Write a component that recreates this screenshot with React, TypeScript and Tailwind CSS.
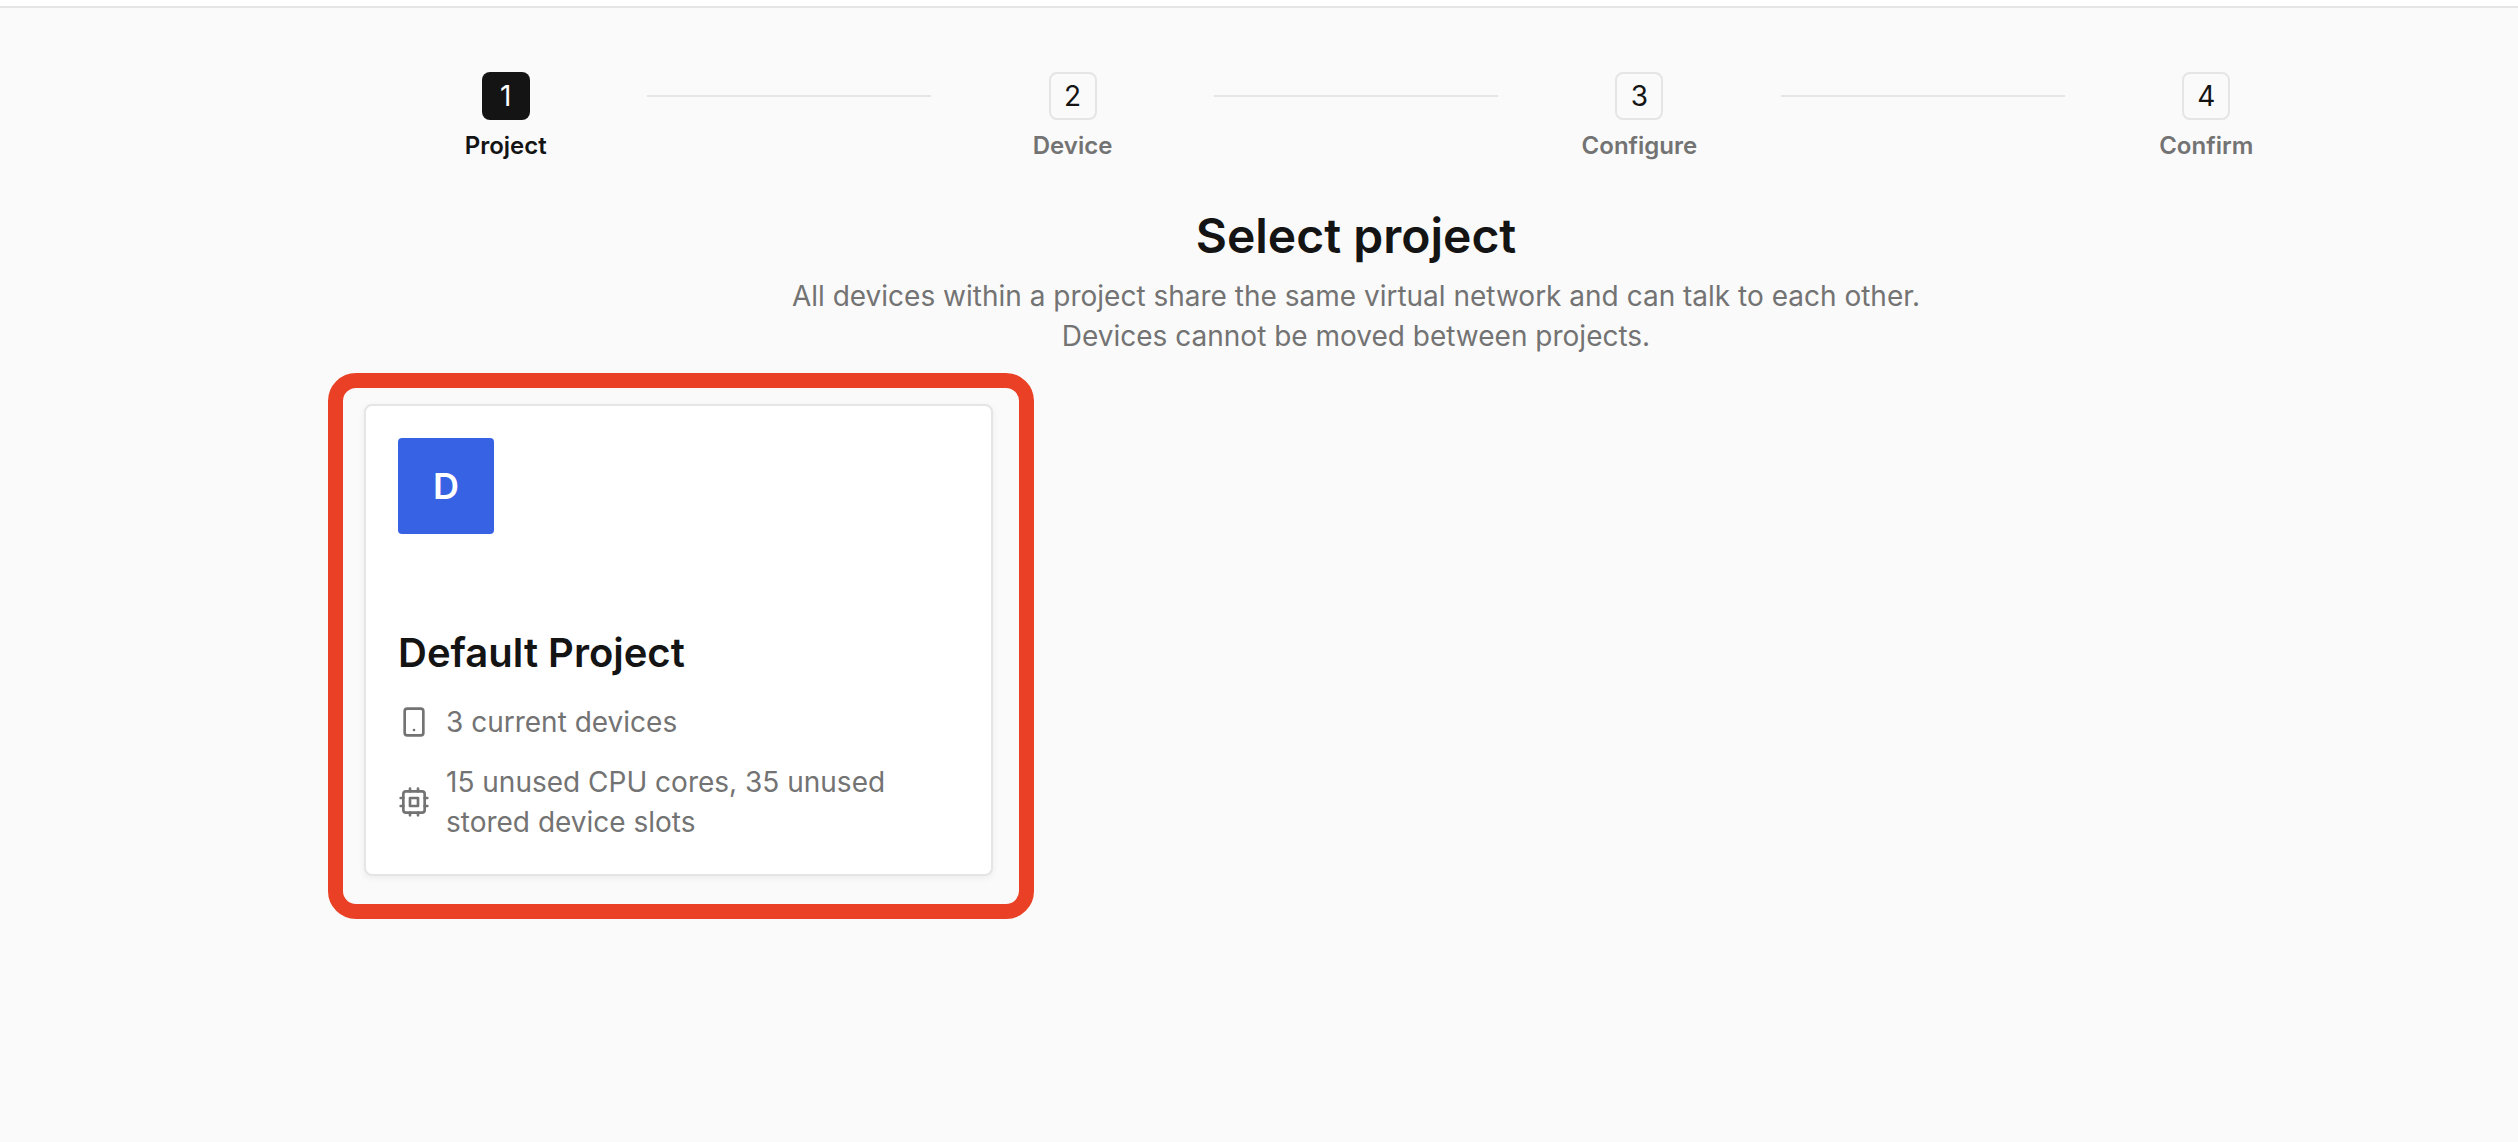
import { Smartphone } from "lucide-react";

const steps = ["Project", "Device", "Configure", "Confirm"];

function CpuIcon() {
  return (
    <svg
      className="size-8 shrink-0"
      viewBox="0 0 24 24"
      fill="none"
      stroke="currentColor"
      strokeWidth="2"
      strokeLinecap="round"
      strokeLinejoin="round"
      aria-hidden="true"
    >
      <rect x="4" y="4" width="16" height="16" rx="2" />
      <rect x="9" y="9" width="6" height="6" />
      <path d="M15 2v2M15 20v2M2 15h2M2 9h2M20 15h2M20 9h2M9 2v2M9 20v2" />
    </svg>
  );
}

function Step({ index, label }: { index: number; label: string }) {
  const active = index === 0;
  return (
    <>
      {index > 0 && <li aria-hidden="true" className="mt-[23px] h-0.5 min-w-0 flex-1 bg-[#e5e5e5]" />}
      <li aria-current={active ? "step" : undefined} className="flex min-w-0 flex-1 flex-col items-center gap-2">
        <span
          className={
            active
              ? "flex size-12 items-center justify-center rounded-lg bg-[#141414] text-[28px] leading-10 text-white"
              : "flex size-12 items-center justify-center rounded-lg border-2 border-[#e5e5e5] text-[28px] leading-10 text-[#141414]"
          }
        >
          {index + 1}
        </span>
        <span
          className={
            active
              ? "text-2xl leading-9 font-semibold text-[#141414]"
              : "text-2xl leading-9 font-semibold text-[#737373]"
          }
        >
          {label}
        </span>
      </li>
    </>
  );
}

export default function App() {
  return (
    <div className="min-h-screen bg-[#fafafa] font-['Inter',sans-serif] text-[#141414]">
      <header className="h-2 border-b-2 border-[#e5e5e5] bg-white" />
      <main className="pt-16 pl-[194px]">
        <div className="mx-auto max-w-[1984px]">
          <ol className="flex items-start">
            {steps.map((label, i) => (
              <Step key={label} index={i} label={label} />
            ))}
          </ol>

          <h1 className="mt-10 text-center text-5xl leading-[64px] font-semibold">Select project</h1>
          <p className="mt-2 text-center text-[28px] leading-10 text-[#737373]">
            All devices within a project share the same virtual network and can talk to each other.
            <br />
            Devices cannot be moved between projects.
          </p>

          <div className="mt-12 grid grid-cols-3 gap-12">
            <div className="relative">
              <button
                type="button"
                className="block w-full cursor-pointer rounded-lg border-2 border-[#e5e5e5] bg-white p-8 text-left shadow-[0_2px_6px_rgba(0,0,0,0.06)]"
              >
                <span className="flex size-24 items-center justify-center rounded bg-[#3862e4] text-4xl font-semibold text-white">
                  D
                </span>
                <span className="mt-[94px] block text-[40px] leading-[50px] font-semibold">Default Project</span>
                <span className="mt-6 flex items-center gap-4 text-[28px] leading-10 text-[#737373]">
                  <Smartphone className="size-8 shrink-0" aria-hidden="true" />
                  3 current devices
                </span>
                <span className="mt-5 flex items-center gap-4 text-[28px] leading-10 text-[#737373]">
                  <CpuIcon />
                  15 unused CPU cores, 35 unused stored device slots
                </span>
              </button>
              <div className="pointer-events-none absolute -top-[31px] -right-[41px] -bottom-[43px] -left-9 rounded-[28px] border-[15px] border-[#ea4025]" />
            </div>
          </div>
        </div>
      </main>
    </div>
  );
}
